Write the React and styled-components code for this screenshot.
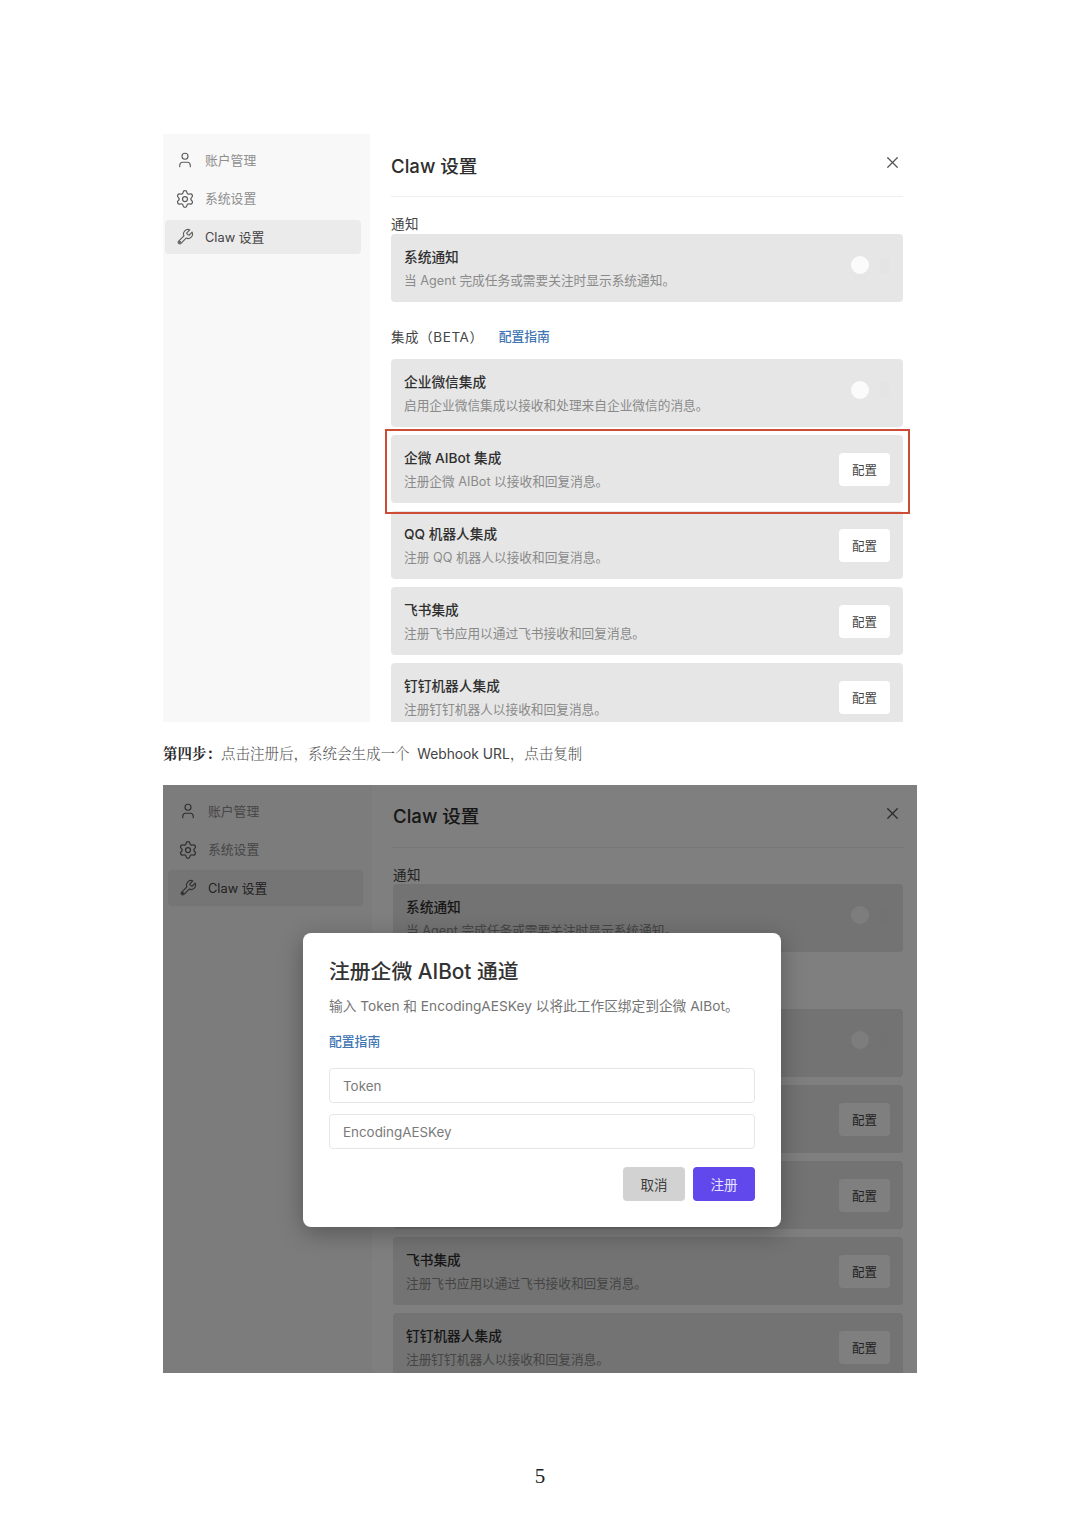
import React from 'react';
import styled, { createGlobalStyle } from 'styled-components';
import { User, Settings, X } from 'lucide-react';

const Global = createGlobalStyle`
  html, body { margin: 0; padding: 0; background: #fff; }
  body { font-family: Inter, "Noto Sans CJK SC", sans-serif; }
`;

const Page = styled.div`
  width: 1080px;
  height: 1527px;
  padding-top: 134px;
  box-sizing: border-box;
  display: flex;
  flex-direction: column;
  align-items: center;
  background: #fff;
  overflow: hidden;
`;

const Panel = styled.section`
  position: relative;
  width: 754px;
  height: 588px;
  flex: none;
  display: flex;
  overflow: hidden;
  background: #fff;
  color: #333;
`;

const Side = styled.aside`
  width: ${p => (p.$dim ? 209 : 207)}px;
  flex: none;
  box-sizing: border-box;
  background: #f8f8f8;
  padding: ${p => (p.$dim ? '8px 9px 0 5px' : '9px 9px 0 2px')};
  display: flex;
  flex-direction: column;
  gap: ${p => (p.$dim ? 2.5 : 4.5)}px;
`;

const NavItem = styled.div`
  height: ${p => (p.$dim ? 36 : 34)}px;
  flex: none;
  display: flex;
  align-items: center;
  gap: 10px;
  padding-left: 10px;
  border-radius: 4px;
  font-size: 12.8px;
  color: ${p => (p.$active ? '#444' : '#8e8e8e')};
  background: ${p => (p.$active ? '#ebebeb' : 'transparent')};
`;

const NavLabel = styled.span`
  margin-bottom: 2px;
`;

const NavIcon = styled.span`
  width: 20px;
  height: 20px;
  flex: none;
  display: flex;
  align-items: center;
  justify-content: center;
  color: #5c5c5c;
`;

const Main = styled.div`
  flex: 1;
  min-width: 0;
  padding: 0 14px 0 21px;
  display: flex;
  flex-direction: column;
`;

const Header = styled.header`
  height: 63px;
  flex: none;
  box-sizing: border-box;
  padding-bottom: ${p => (p.$dim ? 1 : 0)}px;
  padding-right: 1px;
  border-bottom: 1px solid #eeeeee;
  display: flex;
  align-items: center;
  justify-content: space-between;
`;

const Title = styled.h1`
  margin: 0 0 2px;
  font-size: 18.6px;
  font-weight: 500;
  color: #2e2e2e;
`;

const CloseIcon = styled(X)`
  margin-bottom: 5px;
  color: #555;
`;

const SectionLabel = styled.div`
  font-size: 13.5px;
  line-height: 18px;
  color: #444;
  letter-spacing: 0.6px;
  display: flex;
  align-items: center;
  gap: 15px;
  margin-top: ${p => p.$top}px;
  margin-bottom: ${p => p.$bottom}px;
`;

const GuideLink = styled.span`
  color: #3f76b4;
  font-size: 12.8px;
  font-weight: 500;
  letter-spacing: 0;
`;

const CardList = styled.div`
  display: flex;
  flex-direction: column;
  gap: 8px;
`;

const Card = styled.div`
  position: relative;
  height: 68px;
  flex: none;
  box-sizing: border-box;
  padding: 0 13px;
  border-radius: 4px;
  background: #e6e6e6;
  display: flex;
  align-items: center;
  justify-content: space-between;
`;

const Highlight = styled.div`
  position: absolute;
  z-index: 1;
  inset: -6px -7px -11px -6px;
  border: 2.5px solid #cd4c36;
  pointer-events: none;
`;

const CardText = styled.div`
  margin-top: 2px;
  display: flex;
  flex-direction: column;
  gap: 6px;
`;

const CardTitle = styled.div`
  font-size: 13.7px;
  line-height: 18px;
  font-weight: 500;
  color: #2f2f2f;
`;

const CardDesc = styled.div`
  font-size: 12.7px;
  line-height: 18px;
  color: #8a8a8a;
`;

const ConfigButton = styled.div`
  width: 51px;
  height: 33px;
  border-radius: 4px;
  background: #fff;
  color: #444;
  font-size: 12.5px;
  display: flex;
  align-items: center;
  justify-content: center;
`;

const Toggle = styled.div`
  width: 40px;
  height: 18px;
  margin-right: -1px;
  margin-top: -6px;
  display: flex;
  align-items: center;
  justify-content: space-between;
  &::before {
    content: '';
    width: 18px;
    height: 18px;
    border-radius: 50%;
    background: #fbfbfb;
  }
  &::after {
    content: '';
    width: 9px;
    height: 16px;
    margin-right: 2px;
    background: #e4e4e4;
  }
`;

const Backdrop = styled.div`
  position: absolute;
  inset: 0;
  background: rgba(0, 0, 0, 0.5);
  display: flex;
  align-items: flex-start;
  justify-content: center;
  padding: 148px 0 0 4px;
`;

const Modal = styled.div`
  width: 478px;
  height: 294px;
  flex: none;
  box-sizing: border-box;
  padding: 23px 26px 0;
  border-radius: 8px;
  background: #fff;
  box-shadow: 0 6px 24px rgba(0, 0, 0, 0.3);
  display: flex;
  flex-direction: column;
`;

const ModalTitle = styled.h2`
  margin: 0;
  font-size: 20.8px;
  line-height: 32px;
  font-weight: 500;
  color: #333;
`;

const ModalDesc = styled.p`
  margin: 8px 0 0;
  font-size: 13.7px;
  line-height: 20px;
  color: #757575;
`;

const ModalLink = styled(GuideLink)`
  margin-top: 16px;
  line-height: 20px;
`;

const Field = styled.div`
  height: 35px;
  flex: none;
  box-sizing: border-box;
  margin-top: ${p => p.$top}px;
  padding-left: 13px;
  border: 1px solid #e6e6e6;
  border-radius: 4px;
  display: flex;
  align-items: center;
  font-size: 13.4px;
  color: #7a7a7a;
`;

const Actions = styled.div`
  display: flex;
  justify-content: flex-end;
  gap: 8px;
  margin-top: 18px;
`;

const ActionButton = styled.div`
  width: 62px;
  height: 34px;
  border-radius: 4px;
  display: flex;
  align-items: center;
  justify-content: center;
  font-size: 13.5px;
  background: ${p => (p.$primary ? '#6148ec' : '#d2d2d2')};
  color: ${p => (p.$primary ? '#e8e4ff' : '#3d3d3d')};
`;

const Caption = styled.p`
  align-self: flex-start;
  margin: 22px 0 0 163px;
  height: 18px;
  flex: none;
  font-size: 14.5px;
  line-height: 18px;
  font-weight: 300;
  color: #555;
  white-space: pre;
  font-family: "Noto Serif CJK SC", "Liberation Serif", serif;
  b { font-weight: 700; color: #2a2a2a; }
`;

const CaptionLatin = styled.span`
  margin-left: 4px;
  font-family: Inter, "Noto Sans CJK SC", sans-serif;
  font-size: 13.8px;
  font-weight: 400;
  color: #444;
`;

const DimPanel = styled(Panel)`
  margin-top: 23px;
`;

const PageNumber = styled.div`
  margin-top: 90px;
  font-family: "Liberation Serif", serif;
  font-size: 21px;
  line-height: 26px;
  color: #222;
`;

const WrenchIcon = () => (
  <svg width="18" height="18" viewBox="0 0 24 24" fill="none" stroke="currentColor" strokeWidth="1.5" strokeLinecap="round" strokeLinejoin="round">
    <path d="M14.7 6.3a1 1 0 0 0 0 1.4l1.6 1.6a1 1 0 0 0 1.4 0l3.77-3.77a6 6 0 0 1-7.94 7.94l-6.91 6.91a2.12 2.12 0 0 1-3-3l6.91-6.91a6 6 0 0 1 7.94-7.94l-3.76 3.76z" />
    <circle cx="5.2" cy="18.8" r="0.8" />
  </svg>
);

const items = [
  ['企微 AIBot 集成', '注册企微 AIBot 以接收和回复消息。'],
  ['QQ 机器人集成', '注册 QQ 机器人以接收和回复消息。'],
  ['飞书集成', '注册飞书应用以通过飞书接收和回复消息。'],
  ['钉钉机器人集成', '注册钉钉机器人以接收和回复消息。'],
];

function SettingsView({ dim }) {
  return (
    <>
      <Side $dim={dim}>
        <NavItem $dim={dim}><NavIcon><User size={18} strokeWidth={1.5} /></NavIcon><NavLabel>账户管理</NavLabel></NavItem>
        <NavItem $dim={dim}><NavIcon><Settings size={20} strokeWidth={1.5} /></NavIcon><NavLabel>系统设置</NavLabel></NavItem>
        <NavItem $dim={dim} $active><NavIcon><WrenchIcon /></NavIcon><NavLabel>Claw 设置</NavLabel></NavItem>
      </Side>
      <Main>
        <Header $dim={dim}>
          <Title>Claw 设置</Title>
          <CloseIcon size={19} strokeWidth={1.5} />
        </Header>
        <SectionLabel $top={18} $bottom={dim ? 0 : 1}>通知</SectionLabel>
        <Card>
          <CardText>
            <CardTitle>系统通知</CardTitle>
            <CardDesc>当 Agent 完成任务或需要关注时显示系统通知。</CardDesc>
          </CardText>
          <Toggle />
        </Card>
        <SectionLabel $top={26} $bottom={13}>集成（BETA）<GuideLink>配置指南</GuideLink></SectionLabel>
        <CardList>
          <Card>
            <CardText>
              <CardTitle>企业微信集成</CardTitle>
              <CardDesc>启用企业微信集成以接收和处理来自企业微信的消息。</CardDesc>
            </CardText>
            <Toggle />
          </Card>
          {items.map(([title, desc], i) => (
            <Card key={title}>
              <CardText>
                <CardTitle>{title}</CardTitle>
                <CardDesc>{desc}</CardDesc>
              </CardText>
              <ConfigButton>配置</ConfigButton>
              {i === 0 && !dim && <Highlight />}
            </Card>
          ))}
        </CardList>
      </Main>
    </>
  );
}

export default function App() {
  return (
    <Page>
      <Global />
      <Panel>
        <SettingsView />
      </Panel>
      <Caption><b>第四步：</b>点击注册后，系统会生成一个 <CaptionLatin>Webhook URL</CaptionLatin>，点击复制</Caption>
      <DimPanel>
        <SettingsView dim />
        <Backdrop>
          <Modal>
            <ModalTitle>注册企微 AIBot 通道</ModalTitle>
            <ModalDesc>输入 Token 和 EncodingAESKey 以将此工作区绑定到企微 AIBot。</ModalDesc>
            <ModalLink>配置指南</ModalLink>
            <Field $top={16}>Token</Field>
            <Field $top={11}>EncodingAESKey</Field>
            <Actions>
              <ActionButton>取消</ActionButton>
              <ActionButton $primary>注册</ActionButton>
            </Actions>
          </Modal>
        </Backdrop>
      </DimPanel>
      <PageNumber>5</PageNumber>
    </Page>
  );
}
